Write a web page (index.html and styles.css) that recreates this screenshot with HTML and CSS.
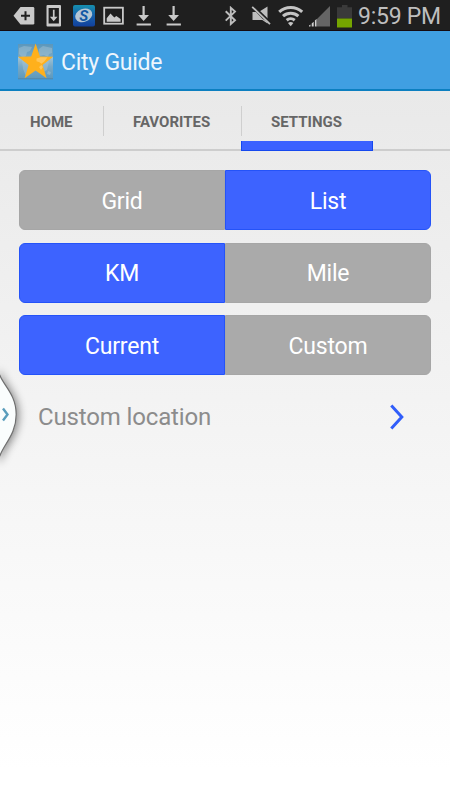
FILE: index.html
```html
<!DOCTYPE html>
<html lang="en">
<head>
    <meta charset="UTF-8">
    <meta name="viewport" content="width=device-width, initial-scale=1.0">
    <title>City Guide</title>
    <link rel="stylesheet" href="styles.css">
</head>
<body>
    <div class="status-bar">
        <div class="notifications">
            <svg width="22" height="20" viewBox="0 0 22 20">
                <path fill="#c9c9c9" d="M7.500 1H20a1.300 1.300 0 0 1 1.300 1.300v15A1.300 1.300 0 0 1 20 18.600H7.500L.5 9.800z"/>
                <path stroke="#1f1f1f" stroke-width="2" d="M12.500 5.300v9M8 9.800h9"/>
            </svg>
            <svg width="16" height="22" viewBox="0 0 16 22">
                <path fill="#c9c9c9" fill-rule="evenodd" d="M1.500 0h12.500a1 1 0 0 1 1 1v19.500a1 1 0 0 1-1 1H1.500a1 1 0 0 1-1-1V1a1 1 0 0 1 1-1zM2.600 3v15.400h10.300V3z"/>
                <path fill="#c9c9c9" d="M6.900 4.800h1.700v7H11.500l-3.800 4.400-3.800-4.400h3z"/>
            </svg>
            <svg width="22" height="22" viewBox="0 0 22 22">
                <defs>
                    <linearGradient id="sBg" x1="0" y1="0" x2="0" y2="1">
                        <stop offset="0" stop-color="#168fae"/>
                        <stop offset="0.450" stop-color="#1664ad"/>
                        <stop offset="1" stop-color="#12409c"/>
                    </linearGradient>
                </defs>
                <rect width="22" height="21.500" rx="2" fill="url(#sBg)"/>
                <ellipse cx="10.700" cy="10.300" rx="8.800" ry="6.500" fill="#b4c6d4" transform="rotate(-22 10.700 10.300)"/>
                <text x="10.700" y="15.600" class="s-letter">S</text>
            </svg>
            <svg width="22" height="20" viewBox="0 0 22 20">
                <rect x="1.200" y="1.700" width="18.700" height="16" fill="none" stroke="#c9c9c9" stroke-width="1.800"/>
                <path fill="#c9c9c9" d="M3.700 15.700v-3.500l3.800-4.600 3.800 4 2-1.500 4.300 3v2.600z"/>
            </svg>
            <svg width="16" height="22" viewBox="0 0 16 22">
                <path fill="#c9c9c9" d="M6.500 1h2.200v9H13l-5.400 6L2.200 10h4.300zM.6 18.500h14.300v2H.6z"/>
            </svg>
            <svg width="16" height="22" viewBox="0 0 16 22">
                <path fill="#c9c9c9" d="M6.500 1h2.200v9H13l-5.400 6L2.200 10h4.300zM.6 18.500h14.300v2H.6z"/>
            </svg>
        </div>
        <div class="system">
            <svg width="12" height="20" viewBox="0 0 12 20">
                <path fill="none" stroke="#bdbdbd" stroke-width="1.900" d="M.7 5.200l9.300 9L5.800 18V1.800L10 5.600l-9.300 9"/>
            </svg>
            <svg width="22" height="20" viewBox="0 0 22 20">
                <path fill="#bdbdbd" d="M1.500 6H5l7.200 7.500v.3L9.300 14H1.500zM8.500 5.500l8-5v12.800zM11 12.500l5.500 3.500v1.500l-6-4z"/>
                <path stroke="#1f1f1f" stroke-width="2" d="M2.500 0l18 17.500"/>
                <path stroke="#bdbdbd" stroke-width="1.800" d="M1.200.8l17.800 17.400"/>
            </svg>
            <svg width="26" height="22" viewBox="0 0 26 22">
                <g fill="none" stroke="#c4c4c4" stroke-width="3.100">
                    <path d="M1.200 6.900a17.300 17.300 0 0 1 23 0"/>
                    <path d="M5 11.200a11.700 11.700 0 0 1 15.400 0"/>
                    <path d="M8.700 15.200a6.200 6.200 0 0 1 8 0"/>
                </g>
                <path fill="#c4c4c4" d="M12.700 21.300l-2.700-3.200a4.200 4.200 0 0 1 5.400 0z"/>
            </svg>
            <svg width="22" height="22" viewBox="0 0 22 22">
                <path fill="#656565" d="M21 1v20.500H7.500V14.500z"/>
                <path fill="#d0d0d0" d="M0 21.500v-1l1.500-1v2zM2.700 21.500v-3l2-1.800v4.800zM5.900 21.500v-6L7.500 14v7.500z"/>
            </svg>
            <svg width="16" height="23" viewBox="0 0 16 23">
                <path fill="#3a3a3a" d="M5 0h5.500v2.200H15V13.500H0V2.200h5z"/>
                <path fill="#75a500" d="M0 13.500h15v9H0z"/>
            </svg>
            <span class="clock">9:59 PM</span>
        </div>
    </div>

    <header>
        <svg class="logo" width="37" height="37" viewBox="0 0 37 37">
            <defs>
                <linearGradient id="mapBg" x1="0" y1="0" x2="0" y2="1">
                    <stop offset="0" stop-color="#5c97bb"/>
                    <stop offset="0.370" stop-color="#76a8c5"/>
                    <stop offset="0.380" stop-color="#a1c3d5"/>
                    <stop offset="0.650" stop-color="#78a9c6"/>
                    <stop offset="1" stop-color="#5b98bd"/>
                </linearGradient>
            </defs>
            <rect x="1" y="1" width="35" height="35" fill="url(#mapBg)"/>
            <path fill="#a9c6d5" opacity=".45" d="M2 5l5-2 8 1-2 4-3 1-1 4-3 2-4-4zM22 6l4-3 9 2v5l-3 1-1 3-4-2-5 1zM5 17h5l4 4-3 7-2 5-3-7zM24 16l5-1 3 4-2 8-4 2-3-7zM31 28l3 1-1 3-3-1z"/>
            <path fill="#ffb01c" d="M18.600.6l4.400 13 13.200.1-10.600 8.200 4 13.300-11-7.800-11 7.800 4-13.300L1 13.700l13.200-.1z"/>
            <path fill="#ffca68" d="M19.500 15.500l4-1.300h7l-3 4-3 2.500-2-1.500-3-1zM22 24l2.500-2 1.500 2-2 3z" opacity=".8"/>
            <path fill="none" stroke="#5287a8" d="M1 35.800h35"/>
        </svg>
        <h1>City Guide</h1>
    </header>

    <nav class="tabs">
        <a class="tab home">HOME</a>
        <a class="tab favorites">FAVORITES</a>
        <a class="tab settings active">SETTINGS</a>
    </nav>

    <main>
        <div class="switch">
            <div class="option">Grid</div>
            <div class="option selected">List</div>
        </div>
        <div class="switch units">
            <div class="option selected">KM</div>
            <div class="option">Mile</div>
        </div>
        <div class="switch">
            <div class="option selected">Current</div>
            <div class="option">Custom</div>
        </div>
        <div class="location">
            <span>Custom location</span>
            <svg width="16" height="28" viewBox="0 0 16 28">
                <path fill="none" stroke="#305dfa" stroke-width="3" d="M2.300 2.600L12.800 14 2.300 25.400"/>
            </svg>
        </div>
    </main>

    <!-- Drawer handle on the left edge -->
    <svg class="handle" width="28" height="100" viewBox="0 0 28 100">
        <path class="handle-body" d="M-3 5L0 10.500C4 21 16.200 30 16.200 49.500S4 79 0 90.500L-3 96z"/>
        <path fill="none" stroke="#5a9dbc" stroke-width="2.400" d="M3 43.500l4.500 6-4.500 6"/>
    </svg>
</body>
</html>
```
FILE: styles.css
```css
*, *::before, *::after {
    box-sizing: border-box;
}
body {
    font-family: Roboto, "Liberation Sans", sans-serif;
    background: linear-gradient(#e9e9e9 90px, #ffffff 770px);
    margin: 0;
    height: 800px;
    overflow: hidden;
    position: relative;
}
svg {
    display: block;
    flex: none;
}
.status-bar {
    display: flex;
    justify-content: space-between;
    height: 31px;
    padding: 0 9px 0 13px;
    background-color: #1f1f1f;
    border-bottom: 1px solid #150a10;
}
.notifications, .system {
    display: flex;
    align-items: center;
    padding-top: 2px;
}
.notifications {
    gap: 11px;
}
.notifications svg:nth-child(4) {
    margin-left: -3px;
}
.notifications svg:nth-child(6) {
    margin-left: 3px;
}
.s-letter {
    font-size: 15px;
    font-weight: bold;
    font-style: italic;
    text-anchor: middle;
    fill: #1259a5;
}
.system svg:nth-child(1) {
    margin-left: -1px;
}
.system svg:nth-child(2) {
    margin-left: 14px;
}
.system svg:nth-child(3) {
    margin-left: 5px;
}
.system svg:nth-child(4) {
    margin-left: 5px;
}
.system svg:nth-child(5) {
    margin-left: 6px;
}
.clock {
    width: 83px;
    margin-left: 5px;
    padding-top: 1px;
    font-size: 23px;
    line-height: 28px;
    letter-spacing: -0.25px;
    color: #bebebe;
    white-space: nowrap;
}
header {
    display: flex;
    align-items: center;
    height: 60px;
    padding: 0 17px;
    background-color: #409fe2;
    border-bottom: 2px solid #0c7fc0;
}
.logo {
    margin-top: 3px;
}
h1 {
    margin: 4px 0 0 7px;
    font-size: 23px;
    font-weight: normal;
    letter-spacing: -0.25px;
    color: #eef6fd;
}
.tabs {
    display: flex;
    height: 60px;
    border-bottom: 2px solid #cdcdcd;
}
.tab {
    position: relative;
    height: 60px;
    padding-left: 30px;
    font-size: 15px;
    font-weight: bold;
    line-height: 62px;
    color: #666;
}
.home {
    width: 103px;
}
.favorites {
    width: 138px;
}
.settings {
    width: 132px;
}
.tab + .tab::before {
    content: "";
    position: absolute;
    left: 0;
    top: 15px;
    width: 1px;
    height: 30px;
    background-color: #cfcfcf;
}
.active::after {
    content: "";
    position: absolute;
    left: 0;
    bottom: 0;
    width: 100%;
    height: 10px;
    background-color: #3b61ff;
    border: 1px solid #1548ee;
    border-top: 0;
}
main {
    display: flex;
    flex-direction: column;
    gap: 12.5px;
    padding: 19px 19px 0;
}
.switch {
    display: flex;
    height: 60px;
}
.option {
    flex: 1;
    border: 1px solid #a6a6a6;
    background-color: #aaa;
    color: #fff;
    font-size: 23px;
    line-height: 61px;
    letter-spacing: -0.2px;
    text-align: center;
}
.units .option {
    line-height: 60px;
}
.option:first-child {
    border-radius: 6px 0 0 6px;
}
.option:last-child {
    border-radius: 0 6px 6px 0;
}
.selected {
    background-color: #3d63ff;
    border-color: #2453f8;
}
.location {
    display: flex;
    align-items: center;
    justify-content: space-between;
    height: 58px;
    padding: 0 26px 0 19px;
    font-size: 24px;
    letter-spacing: -0.15px;
    color: #8c8c8c;
}
.handle {
    position: absolute;
    left: 0;
    top: 365px;
    overflow: visible;
}
.handle-body {
    fill: #fafdfd;
    stroke: #6f6f6f;
    stroke-width: 1.2;
    filter: drop-shadow(2px 1px 4px rgba(0, 0, 0, 0.45));
}
```
